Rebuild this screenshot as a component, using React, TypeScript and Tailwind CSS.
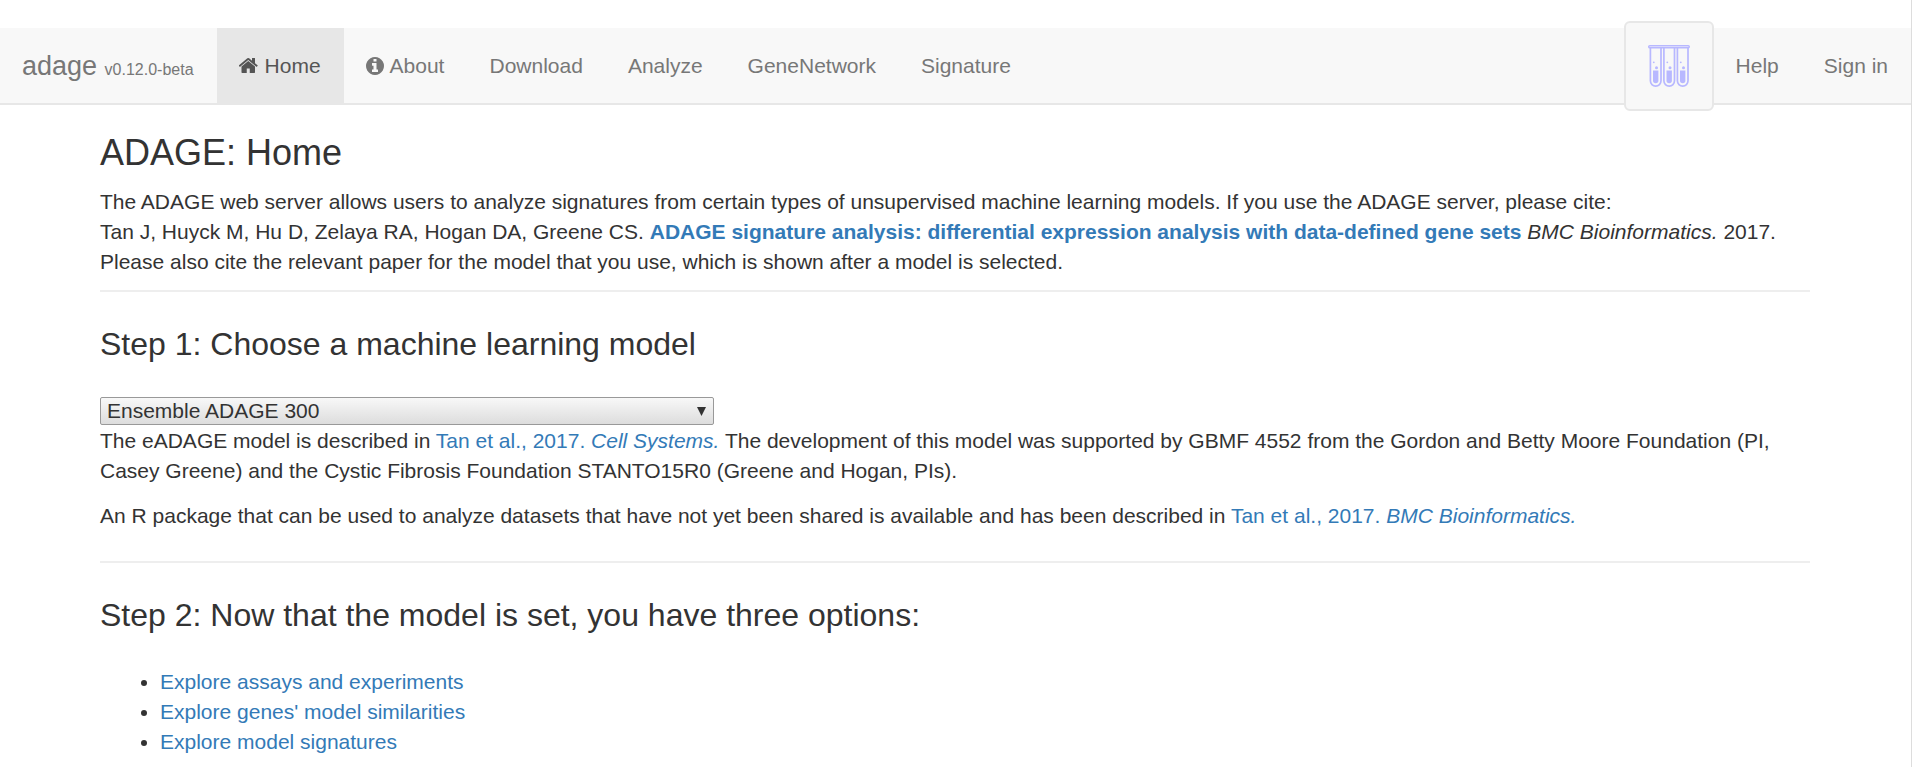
import type { ReactNode } from "react";

function HomeIcon() {
  return (
    <svg viewBox="64 0 1664 1792" className="h-[21px] w-5 shrink-0 fill-current" aria-hidden="true">
      <path d="M1408 992v480q0 26-19 45t-45 19h-384v-384h-256v384h-384q-26 0-45-19t-19-45v-480q0-1 .5-3t.5-3l575-474 575 474q1 2 1 6zm223-69l-62 74q-8 9-21 11h-3q-13 0-21-7l-692-577-692 577q-12 8-24 7-13-2-21-11l-62-74q-8-10-7-23.5t11-21.5l719-599q32-26 76-26t76 26l244 204v-195q0-14 9-23t23-9h192q14 0 23 9t9 23v408l219 182q10 8 11 21.5t-7 23.5z" />
    </svg>
  );
}

function InfoIcon() {
  return (
    <svg viewBox="128 128 1536 1536" className="h-[18px] w-[18px] shrink-0 fill-current" aria-hidden="true">
      <path d="M1152 1376v-160q0-14-9-23t-23-9h-96v-512q0-14-9-23t-23-9h-320q-14 0-23 9t-9 23v160q0 14 9 23t23 9h96v320h-96q-14 0-23 9t-9 23v160q0 14 9 23t23 9h448q14 0 23-9t9-23zm-128-896v-160q0-14-9-23t-23-9h-192q-14 0-23 9t-9 23v160q0 14 9 23t23 9h192q14 0 23-9t9-23zm640 416q0 209-103 385.5t-279.5 279.5-385.5 103-385.5-103-279.5-279.5-103-385.5 103-385.5 279.5-279.5 385.5-103 385.5 103 279.5 279.5 103 385.5z" />
    </svg>
  );
}

function TestTubesIcon() {
  return (
    <svg viewBox="0 0 42 42" className="h-[42px] w-[42px]" aria-hidden="true">
      <rect x="0.7" y="0.7" width="40.6" height="2" rx="1" fill="none" stroke="#b8b8ff" strokeWidth="1.4" />
      {[2, 15.5, 29].map((x) => (
        <g key={x} transform={`translate(${x} 0)`}>
          <path d="M0.4 2.5V35.8a5.3 5.3 0 0 0 10.6 0V2.5" fill="none" stroke="#b8b8ff" strokeWidth="1.7" />
          <path d="M3 25.5h5.4V35.6a2.7 2.7 0 0 1-5.4 0z" fill="#b8b8ff" />
          <circle cx="3.8" cy="17.3" r="0.9" fill="#b8b8ff" />
          <circle cx="6.5" cy="22.8" r="1.5" fill="#b8b8ff" />
        </g>
      ))}
    </svg>
  );
}

function NavItem({ active, children }: { active?: boolean; children: ReactNode }) {
  return (
    <li>
      <a
        href="#"
        className={
          active
            ? "flex h-[75px] items-center gap-1.5 bg-[#e7e7e7] pr-[23px] pl-[22px] text-[#555]"
            : "flex h-[75px] items-center gap-1.5 pr-[23px] pl-[22px] text-[#777]"
        }
      >
        {children}
      </a>
    </li>
  );
}

function Link({ children }: { children: ReactNode }) {
  return (
    <a href="#" className="text-[#337ab7]">
      {children}
    </a>
  );
}

export default function App() {
  return (
    <div className="min-h-screen border-r border-[#ddd] bg-white pt-7 font-['Liberation_Sans',Arial,sans-serif] text-[21px] leading-[30px] text-[#333]">
      <nav className="flex h-[77px] items-center justify-between border-b-2 border-[#e7e7e7] bg-[#f8f8f8]">
        <div className="flex items-center">
          <a href="#" className="pt-1 pr-[23px] pl-[22px] text-[27px] text-[#777]">
            adage <small className="text-[16px]">v0.12.0-beta</small>
          </a>
          <ul className="flex">
            <NavItem active>
              <HomeIcon />
              Home
            </NavItem>
            <NavItem>
              <InfoIcon />
              About
            </NavItem>
            <NavItem>Download</NavItem>
            <NavItem>Analyze</NavItem>
            <NavItem>GeneNetwork</NavItem>
            <NavItem>Signature</NavItem>
          </ul>
        </div>
        <div className="flex items-center">
          <button
            type="button"
            aria-label="Analysis basket"
            className="flex h-[90px] w-[90px] items-center justify-center rounded-md border-2 border-[#e7e7e7] bg-[#f8f8f8]"
          >
            <TestTubesIcon />
          </button>
          <ul className="flex">
            <NavItem>Help</NavItem>
            <NavItem>Sign in</NavItem>
          </ul>
        </div>
      </nav>

      <main className="mr-[101px] ml-[100px] pt-7">
        <h2 className="text-[36px] leading-10">ADAGE: Home</h2>
        <p className="mt-[14px]">
          The ADAGE web server allows users to analyze signatures from certain types of unsupervised machine
          learning models. If you use the ADAGE server, please cite:
          <br />
          Tan J, Huyck M, Hu D, Zelaya RA, Hogan DA, Greene CS.{" "}
          <b>
            <Link>ADAGE signature analysis: differential expression analysis with data-defined gene sets</Link>
          </b>{" "}
          <i>BMC Bioinformatics.</i> 2017.
          <br />
          Please also cite the relevant paper for the model that you use, which is shown after a model is selected.
        </p>

        <section className="mt-[13px] border-t-2 border-[#eee] pt-8">
          <h3 className="text-[32px] leading-10">
            <label htmlFor="model">Step 1: Choose a machine learning model</label>
          </h3>
          <div className="relative mt-[33px] mb-px w-[614px]">
            <select
              id="model"
              className="block h-7 w-full appearance-none rounded-xs border border-[#999] bg-linear-to-b from-[#f8f8f8] to-[#ddd] pl-[6px] leading-6 text-[#333]"
            >
              <option>Ensemble ADAGE 300</option>
            </select>
            <svg
              viewBox="0 0 9 9"
              className="pointer-events-none absolute top-[10px] right-2 h-[9px] w-[9px] fill-[#333]"
              aria-hidden="true"
            >
              <path d="M0 0h9L4.5 9z" />
            </svg>
          </div>
          <p>
            The eADAGE model is described in{" "}
            <Link>
              Tan et al., 2017. <i>Cell Systems.</i>
            </Link>{" "}
            The development of this model was supported by GBMF 4552 from the Gordon and Betty Moore Foundation (PI,
            Casey Greene) and the Cystic Fibrosis Foundation STANTO15R0 (Greene and Hogan, PIs).
          </p>
          <p className="mt-[15px]">
            An R package that can be used to analyze datasets that have not yet been shared is available and has been
            described in{" "}
            <Link>
              Tan et al., 2017. <i>BMC Bioinformatics.</i>
            </Link>
          </p>
        </section>

        <section className="mt-[30px] border-t-2 border-[#eee] pt-8">
          <h3 className="text-[32px] leading-10">Step 2: Now that the model is set, you have three options:</h3>
          <ul className="mt-8 list-disc pl-[60px]">
            <li>
              <Link>Explore assays and experiments</Link>
            </li>
            <li>
              <Link>Explore genes' model similarities</Link>
            </li>
            <li>
              <Link>Explore model signatures</Link>
            </li>
          </ul>
        </section>
      </main>
    </div>
  );
}
